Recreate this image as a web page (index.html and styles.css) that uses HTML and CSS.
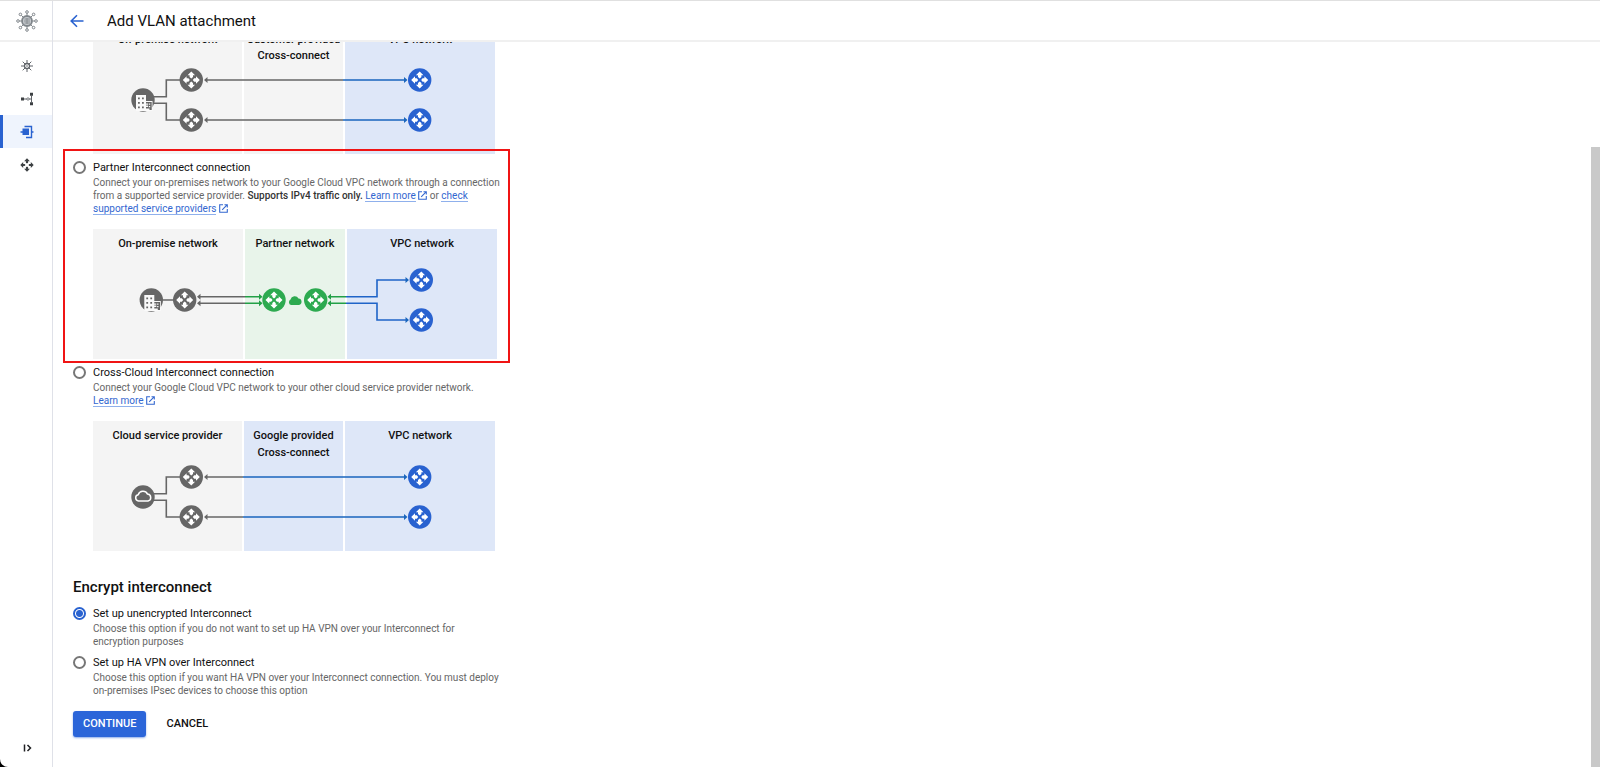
FILE: index.html
```html
<!DOCTYPE html>
<html lang="en">
<head>
<meta charset="utf-8">
<title>Add VLAN attachment</title>
<link rel="stylesheet" href="styles.css">
</head>
<body>
<svg class="defs" width="0" height="0" aria-hidden="true">
  <defs>
    <path id="arm" d="M0-8.500 3.800-4.700H1.700V-2.900L0-1.500-1.700-2.900V-4.700H-3.800Z" fill="#fff"/>
    <g id="router">
      <circle r="11.700"/>
      <use href="#arm"/>
      <use href="#arm" transform="rotate(90)"/>
      <use href="#arm" transform="rotate(180)"/>
      <use href="#arm" transform="rotate(270)"/>
    </g>
    <g id="building">
      <circle r="11.700" fill="#666"/>
      <path d="M-7-5H3V1H9.500V11H-7Z" fill="#fafafa"/>
      <path d="M-5-2.500h1.800v1.800H-5zM-1-2.500H.8v1.800H-1zM-5 2h1.800v1.800H-5zM-1 2H.8v1.800H-1zM-5 6.500h1.800v1.800H-5zM-1 6.500H.8v1.800H-1zM3 2H8.700v8H6.500V8.500H3V7H5V5.500H3V4.700H5V3.500H3z" fill="#666"/>
      <path d="M5.800 3.500H7.200v1.200H5.800zM5.800 6H7.200v1.200H5.800z" fill="#fafafa"/>
    </g>
    <path id="ext" d="M4 .7H.7v7.600h7.600V5M5.500.7h2.800v2.800M8.300.7 3.200 5.800" fill="none" stroke="currentColor" stroke-width="1.100"/>
  </defs>
</svg>

<div class="app">
  <aside class="side">
    <div class="brand">
      <svg width="22" height="22" viewBox="-11 -11 22 22" fill="none" stroke="#80868b">
        <circle r="5" stroke-width="1.800" fill="#c4c8cc"/>
        <path d="M-2.500-2H3M-3 0H3M-2.500 2H3M0-3V3" stroke-width=".8"/>
        <path d="M0-5.500V-8M0 5.500V8M-5.500 0H-8M5.500 0H8M-4-4-5.800-5.800M4-4 5.800-5.800M-4 4-5.800 5.800M4 4 5.800 5.800"/>
        <g fill="#fff"><circle cy="-9" r="1.300"/><circle cy="9" r="1.300"/><circle cx="-9" r="1.300"/><circle cx="9" r="1.300"/><circle cx="-6.600" cy="-6.600" r="1.300"/><circle cx="6.600" cy="-6.600" r="1.300"/><circle cx="-6.600" cy="6.600" r="1.300"/><circle cx="6.600" cy="6.600" r="1.300"/></g>
      </svg>
    </div>
    <nav class="nav">
      <a class="nav-item" href="#" aria-label="Hybrid connectivity">
        <svg width="14" height="14" viewBox="-7 -7 14 14" fill="none" stroke="#5f6368"><circle r="2.500" stroke-width="1.300"/><circle r=".8" fill="#5f6368" stroke="none"/><path d="M0-3V-6M0 3V6M-3 0H-6M3 0H6M-2-2-4.300-4.300M2-2 4.300-4.300M-2 2-4.300 4.300M2 2 4.300 4.300"/></svg>
      </a>
      <a class="nav-item" href="#" aria-label="VPN">
        <svg width="14" height="14" viewBox="-7 -7 14 14" fill="#3c4043"><path d="M-6-1.500h3v3h-3zM3-6.300h3v3H3zM3 3.300h3v3H3z"/><path d="M-3 0H0M2 0H4.500M4.500-4V4" stroke="#5f6368" fill="none"/><circle cx="1" r="1.200" fill="#fff" stroke="#5f6368" stroke-width=".8"/></svg>
      </a>
      <a class="nav-item active" href="#" aria-label="Interconnect" aria-current="page">
        <svg width="14" height="14" viewBox="-7 -7 14 14" fill="#2962d0"><path d="M-4.500-3.500h6.500v6.500h-6.500zM-6.500-.8h2V.8h-2zM4.500-.8h2V.8h-2z"/><path d="M-2.500-5.500H4.500V5.500H-1" fill="none" stroke="#2962d0" stroke-width="1.400"/></svg>
      </a>
      <a class="nav-item" href="#" aria-label="Cloud Routers">
        <svg width="14" height="14" viewBox="-7 -7 14 14" fill="#3c4043"><path id="head" d="M0-6.700 2.900-3.800H1.100V-2.300L0-1.500-1.100-2.300V-3.800H-2.900Z"/><use href="#head" transform="rotate(90)"/><use href="#head" transform="rotate(180)"/><use href="#head" transform="rotate(270)"/></svg>
      </a>
    </nav>
    <button class="expand" aria-label="Expand navigation">
      <svg width="10" height="10" viewBox="0 0 10 10" fill="none" stroke="#202124" stroke-width="1.500"><path d="M1.500 1.500v7M4.500 2l3 3-3 3"/></svg>
    </button>
  </aside>

  <div class="page">
    <header class="topbar">
      <a class="back" href="#" aria-label="Back">
        <svg width="14" height="14" viewBox="0 0 14 14" fill="none" stroke="#2962d0" stroke-width="1.600"><path d="M13.500 7H1.500M7 1.200 1.200 7 7 12.800"/></svg>
      </a>
      <h1>Add VLAN attachment</h1>
    </header>

    <div class="scroller">
      <main class="content">
        <figure class="diagram dedicated">
          <div class="zone gray">On-premise network</div>
          <div class="zone gray">Customer provided<br>Cross-connect</div>
          <div class="zone blue">VPC network</div>
          <svg class="wires" width="402" height="130" viewBox="0 0 402 130">
            <g fill="none" stroke="#666" stroke-width="1.600">
              <path d="M60 72.700H73.300V56H88M60 79.300H73.300V96H88M113 56H250M113 96H250"/>
              <path d="M250 56H312M250 96H312" stroke="#1a66bd"/>
            </g>
            <path d="M111 56l3.500-3v6zM111 96l3.500-3v6z" fill="#666"/>
            <path d="M314.500 56l-3.500-3v6zM314.500 96l-3.500-3v6z" fill="#1a66bd"/>
            <use href="#building" x="50" y="76"/>
            <g fill="#666"><use href="#router" x="98.300" y="56"/><use href="#router" x="98.300" y="96"/></g>
            <g fill="#2962d0"><use href="#router" x="326.700" y="56"/><use href="#router" x="326.700" y="96"/></g>
          </svg>
        </figure>

        <section class="option highlighted">
          <input type="radio" name="connection" id="partner">
          <label for="partner">Partner Interconnect connection</label>
          <p>Connect your on-premises network to your Google Cloud VPC network through a connection from a supported service provider. <strong>Supports IPv4 traffic only.</strong> <a href="#">Learn more</a> <svg class="ext" width="9" height="9"><use href="#ext"/></svg> or <a href="#">check supported service providers</a> <svg class="ext" width="9" height="9"><use href="#ext"/></svg></p>
          <figure class="diagram wide">
            <div class="zone gray">On-premise network</div>
            <div class="zone green">Partner network</div>
            <div class="zone blue">VPC network</div>
            <svg class="wires" width="404" height="130" viewBox="0 0 404 130">
              <g fill="none" stroke="#666" stroke-width="1.600">
                <path d="M68 71H82M106 67.700H152M106 74.300H152"/>
                <path d="M152 67.700H167M152 74.300H167M237 67.700H253M237 74.300H253" stroke="#22a046"/>
                <path d="M253 67.700H284V51H314M253 74.300H284V91H314" stroke="#1f64c8"/>
              </g>
              <path d="M104 67.700l3.500-3v6zM104 74.300l3.500-3v6z" fill="#666"/>
              <path d="M169.500 67.700l-3.500-3v6zM169.500 74.300l-3.500-3v6zM234.500 67.700l3.500-3v6zM234.500 74.300l3.500-3v6z" fill="#22a046"/>
              <path d="M316 51l-3.500-3v6zM316 91l-3.500-3v6z" fill="#1a66bd"/>
              <path d="M198 76a3 3 0 0 1-.5-5.500 4.300 4.300 0 0 1 8-1 3.300 3.300 0 0 1 .5 6.500Z" fill="#2daa50"/>
              <use href="#building" x="58.300" y="71"/>
              <g fill="#666"><use href="#router" x="91.700" y="71"/></g>
              <g fill="#2daa50"><use href="#router" x="181" y="71"/><use href="#router" x="222.700" y="71"/></g>
              <g fill="#2962d0"><use href="#router" x="328.300" y="51"/><use href="#router" x="328.300" y="91"/></g>
            </svg>
          </figure>
        </section>

        <section class="option">
          <input type="radio" name="connection" id="cross">
          <label for="cross">Cross-Cloud Interconnect connection</label>
          <p>Connect your Google Cloud VPC network to your other cloud service provider network. <a class="more" href="#">Learn more</a> <svg class="ext" width="9" height="9"><use href="#ext"/></svg></p>
          <figure class="diagram">
            <div class="zone gray">Cloud service provider</div>
            <div class="zone blue">Google provided<br>Cross-connect</div>
            <div class="zone blue">VPC network</div>
            <svg class="wires" width="402" height="130" viewBox="0 0 402 130">
              <g fill="none" stroke="#666" stroke-width="1.600">
                <path d="M60 72.700H73.300V56H88M60 79.300H73.300V96H88M113 56H150M113 96H150"/>
                <path d="M150 56H312M150 96H312" stroke="#1a66bd"/>
              </g>
              <path d="M111 56l3.500-3v6zM111 96l3.500-3v6z" fill="#666"/>
              <path d="M314.500 56l-3.500-3v6zM314.500 96l-3.500-3v6z" fill="#1a66bd"/>
              <circle cx="50" cy="76" r="11.700" fill="#666"/>
              <path d="M45.500 80a3.200 3.200 0 0 1-.3-6.300 5 5 0 0 1 9.300-.6 3.500 3.500 0 0 1 .5 6.900Z" fill="none" stroke="#fff" stroke-width="1.500"/>
              <g fill="#666"><use href="#router" x="98.300" y="56"/><use href="#router" x="98.300" y="96"/></g>
              <g fill="#2962d0"><use href="#router" x="326.700" y="56"/><use href="#router" x="326.700" y="96"/></g>
            </svg>
          </figure>
        </section>

        <h2>Encrypt interconnect</h2>
        <div class="choices">
          <section class="option">
            <input type="radio" name="encrypt" id="plain" checked>
            <label for="plain">Set up unencrypted Interconnect</label>
            <p>Choose this option if you do not want to set up HA VPN over your Interconnect for encryption purposes</p>
          </section>
          <section class="option">
            <input type="radio" name="encrypt" id="havpn">
            <label for="havpn">Set up HA VPN over Interconnect</label>
            <p>Choose this option if you want HA VPN over your Interconnect connection. You must deploy on-premises IPsec devices to choose this option</p>
          </section>
        </div>
        <div class="actions">
          <button class="primary">CONTINUE</button>
          <button class="text">CANCEL</button>
        </div>
      </main>
      <div class="track"><div class="thumb"></div></div>
    </div>
  </div>
</div>
</body>
</html>
```
FILE: styles.css
```css
*, *::after { box-sizing: border-box; }

body {
  margin: 0;
  background: #000;
  color: #111;
  font: 11px/16px Roboto, sans-serif;
}

h1, h2, p, figure { margin: 0; }

button {
  border: 0;
  background: none;
  font: inherit;
  cursor: pointer;
}

.defs { position: absolute; }

.app {
  display: flex;
  height: 100vh;
  overflow: hidden;
  border-top: 1px solid #e0e0e0;
  border-bottom-left-radius: 8px;
  background: #fff;
}

.side {
  display: flex;
  flex-direction: column;
  flex: none;
  width: 53px;
  border-right: 1px solid #dfe1e8;
}

.brand {
  display: grid;
  place-items: center;
  height: 41px;
  padding-left: 1px;
  border-bottom: 2px solid #f0f0f0;
}

.nav {
  display: flex;
  flex-direction: column;
  flex: 1;
  padding-top: 7px;
}

.nav-item {
  display: grid;
  place-items: center;
  height: 33px;
  padding-right: 1px;
  border-left: 3px solid transparent;
}

.nav-item.active {
  border-left-color: #2962d0;
  background: #eff4fd;
}

.expand {
  display: grid;
  place-items: center;
  height: 40px;
  padding: 1px 0 0 3px;
}

.page {
  display: flex;
  flex-direction: column;
  flex: 1;
  min-width: 0;
}

.topbar {
  display: flex;
  align-items: center;
  flex: none;
  gap: 23px;
  height: 41px;
  padding-left: 17px;
  border-bottom: 2px solid #f0f0f0;
}

.back { display: flex; }

h1 {
  font-size: 15px;
  font-weight: 400;
  line-height: 24px;
}

.scroller {
  display: flex;
  flex: 1;
  min-height: 0;
  overflow: hidden;
}

.content {
  flex: 1;
  margin-top: -18px;
  padding-left: 20px;
}

.diagram {
  position: relative;
  display: grid;
  grid-template-columns: 149px 99px 150px;
  column-gap: 2px;
  width: max-content;
  height: 130px;
  margin-left: 20px;
}

.diagram.wide { grid-template-columns: 150px 100px 150px; }

.zone {
  padding-top: 6px;
  text-align: center;
  font-weight: 500;
  line-height: 17px;
}

.dedicated .zone {
  padding-top: 8px;
  line-height: 16px;
}

.gray { background: #f4f4f4; }
.green { background: #e8f4ea; }
.blue { background: #dee7f8; }

.wires {
  position: absolute;
  inset: 0;
}

.option {
  position: relative;
  display: grid;
  grid-template-columns: 13px 1fr;
  column-gap: 7px;
  align-items: start;
  margin-top: 6px;
}

.option p {
  grid-column: 2;
  max-width: 410px;
  color: #666;
  font-size: 10px;
  line-height: 13px;
}

.option strong {
  color: #333;
  font-weight: 500;
}

.option .diagram {
  grid-column: 2;
  margin: 14px 0 0;
}

.highlighted::after {
  content: "";
  position: absolute;
  inset: -11px auto -4px -10px;
  width: 447px;
  border: 2px solid #f01414;
  pointer-events: none;
}

input[type="radio"] {
  appearance: none;
  width: 13px;
  height: 13px;
  margin: 1px 0;
  border: 2px solid #777;
  border-radius: 50%;
}

input[type="radio"]:checked {
  border-color: #2962d0;
  background: radial-gradient(circle, #2962d0 3px, #fff 4px);
}

.option a {
  color: #3367d0;
  text-decoration: none;
  border-bottom: 1px solid #8fb0ec;
}

.option .more { white-space: nowrap; }

.ext {
  color: #3367d0;
  vertical-align: -1px;
}

h2 {
  margin-top: 24px;
  font-size: 15px;
  font-weight: 500;
  line-height: 24px;
}

.choices .option { margin-top: 7px; }

.actions {
  display: flex;
  gap: 8px;
  margin-top: 14px;
}

.actions button {
  height: 26px;
  padding: 0 10px;
  border-radius: 3px;
  font-weight: 500;
}

.actions .primary {
  background: #2b65d9;
  color: #fff;
  box-shadow: 0 1px 2px #2b65d988;
}

.actions .text { color: #111; padding: 0 12px; }

.track {
  flex: none;
  width: 9px;
  padding-top: 105px;
}

.thumb {
  height: 100%;
  background: #c9c9c9;
}
```
